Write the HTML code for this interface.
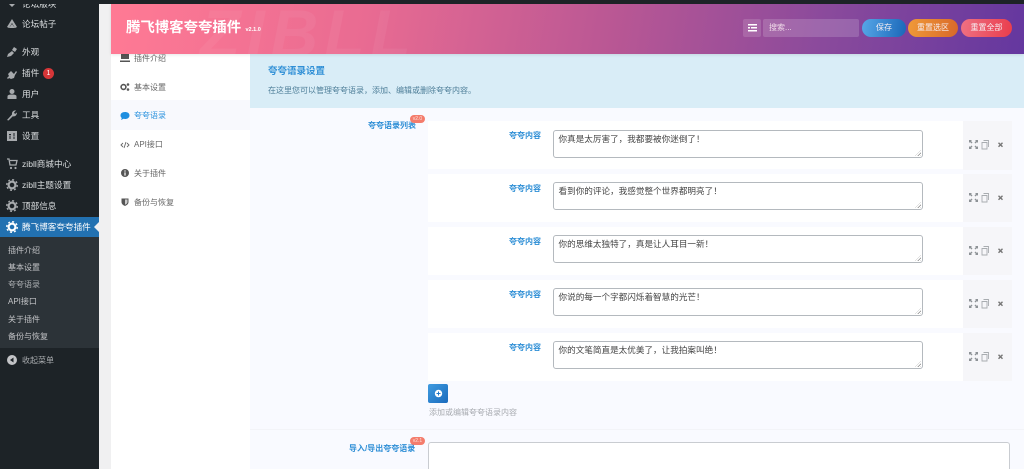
<!DOCTYPE html>
<html lang="zh">
<head>
<meta charset="utf-8">
<title>腾飞博客夸夸插件</title>
<style>
*{box-sizing:border-box}
html,body{margin:0;padding:0;width:1024px;height:469px;overflow:hidden}
#page{position:absolute;left:0;top:0;width:1024px;height:469px;overflow:hidden;background:#f0f0f1;font-family:"Liberation Sans","Noto Sans CJK SC",sans-serif;font-size:9px;color:#444}
.a{position:absolute;white-space:nowrap}
#side{position:absolute;left:0;top:0;width:98.5px;height:469px;background:#1d2327}
#top{position:absolute;left:0;top:0;width:1024px;height:3.5px;background:#1d2327}
.m{position:absolute;left:22px;color:#dcdfe1;font-size:8.6px;line-height:12px;white-space:nowrap}
.ic{position:absolute;left:6px;width:12px;height:12px}
#act{position:absolute;left:0;top:217px;width:98.5px;height:20px;background:#2271b1}
#act:after{content:"";position:absolute;right:0;top:5px;border:5px solid transparent;border-right-color:#f0f0f1;border-left:0}
#sub{position:absolute;left:0;top:237px;width:98.5px;height:111px;background:#2c3338}
.s{position:absolute;left:8px;color:#c3c4c7;font-size:8px;line-height:11px;white-space:nowrap}
#nav{position:absolute;left:111px;top:53px;width:139px;height:416px;background:#fff}
.n{position:absolute;left:23px;font-size:8px;line-height:12px;color:#666;white-space:nowrap}
.ni{position:absolute;left:9px;width:10px;height:10px}
#navact{position:absolute;left:0;top:47px;width:139px;height:30px;background:#f8f9fd}
#main{position:absolute;left:250px;top:53px;width:774px;height:416px;background:#f9faff}
#notice{position:absolute;left:250px;top:53px;width:774px;height:55px;background:#d9edf7}
#hdr{position:absolute;left:111px;top:3.5px;width:913px;height:50px;background:linear-gradient(100deg,#ff7a94 0%,#e96b92 28%,#b95794 55%,#8a4a9c 78%,#64379f 100%);box-shadow:0 1px 3px rgba(0,0,0,.1);overflow:hidden}
.btn{position:absolute;top:15.5px;height:18px;border-radius:9px;color:#f6eef2;font-size:8px;line-height:18px;text-align:center}
.row{position:absolute;left:428px;width:535px;background:#fff}
.act{position:absolute;left:963px;width:49px;background:#f6f6f9}
.lb{position:absolute;left:509px;color:#2f8fd6;font-size:8px;font-weight:bold;line-height:11px;white-space:nowrap}
.ta{position:absolute;left:553px;width:370px;height:28px;border:1px solid #b4b9be;border-radius:3px;background:#fff;color:#444;font-size:8.6px;line-height:13px;padding:1.5px 4.5px;white-space:nowrap}
.ta:after{content:"";position:absolute;right:1px;bottom:1px;width:6px;height:6px;background:repeating-linear-gradient(135deg,transparent 0 1.5px,#888 1.5px 2.2px);clip-path:polygon(100% 0,100% 100%,0 100%)}
.tool{position:absolute;left:969px;width:36px;height:10px}
.badge{position:absolute;background:#f47c6c;color:#fbe3de;border-radius:4px;font-size:5px;line-height:8px;height:8px;width:15px;text-align:center;white-space:nowrap}
</style>
</head>
<body>
<div id="page">
<div id="main"></div>
<div id="nav">
  <div id="navact"></div>
  <svg class="ni" style="top:0" viewBox="0 0 10 10"><path d="M1 1h8v5H1zM0 7.500h10V9H0z" fill="#555"/></svg>
  <div class="n" style="top:0">插件介绍</div>
  <svg class="ni" style="top:29px" viewBox="0 0 10 10"><circle cx="3.500" cy="5" r="2.400" fill="none" stroke="#555" stroke-width="1.600"/><circle cx="8" cy="2.500" r="1.300" fill="#555"/><circle cx="8" cy="7.500" r="1.300" fill="#555"/></svg>
  <div class="n" style="top:29px">基本设置</div>
  <svg class="ni" style="top:57.500px" viewBox="0 0 10 10"><path d="M5 1C2 1 .5 2.600.5 4.500c0 1 .5 1.900 1.300 2.500L1 9l2.600-1.200C4 8 4.500 8 5 8c3 0 4.500-1.600 4.500-3.500S8 1 5 1z" fill="#1e8fe0"/></svg>
  <div class="n" style="top:57px;color:#2f95df">夸夸语录</div>
  <svg class="ni" style="top:86.500px" viewBox="0 0 10 10"><path d="M3 3 1 5l2 2M7 3l2 2-2 2M6 2 4 8" fill="none" stroke="#666" stroke-width=".9"/></svg>
  <div class="n" style="top:86px">API接口</div>
  <svg class="ni" style="top:115px" viewBox="0 0 10 10"><circle cx="5" cy="5" r="4" fill="#555"/><path d="M4.400 2.400h1.200v1.200H4.400zM4.400 4.400h1.200v3.200H4.400z" fill="#fff"/></svg>
  <div class="n" style="top:115px">关于插件</div>
  <svg class="ni" style="top:144px" viewBox="0 0 10 10"><path d="M1.500 1.500h7V5c0 2-1.600 3.200-3.500 4C3.100 8.200 1.500 7 1.500 5z" fill="#555"/><path d="M5 2.500h2.500V5C7.500 6.300 6.400 7.200 5 7.800z" fill="#ccc"/></svg>
  <div class="n" style="top:144px">备份与恢复</div>
</div>
<div id="notice"></div>
<div class="a" style="left:268px;top:64.500px;font-size:9.500px;line-height:13px;font-weight:bold;color:#2f8fd6">夸夸语录设置</div>
<div class="a" style="left:268px;top:85px;font-size:8px;line-height:12px;color:#4f7f99">在这里您可以管理夸夸语录，添加、编辑或删除夸夸内容。</div>

<div id="hdr">
  <div class="a" style="left:89px;top:-4px;font-size:66px;line-height:66px;font-weight:bold;font-style:italic;letter-spacing:6px;color:rgba(255,255,255,.05)">ZIBLL</div>
  <div class="a" style="left:15px;top:13.500px;font-size:14.400px;line-height:22px;font-weight:bold;color:#fff">腾飞博客夸夸插件</div>
  <div class="a" style="left:134.500px;top:22.500px;font-size:5.500px;line-height:8px;font-weight:bold;color:#fff">v2.1.0</div>
  <div class="a" style="left:632px;top:15.500px;width:18px;height:18px;background:rgba(255,255,255,.14);border-radius:2px"></div>
  <svg class="a" style="left:636.500px;top:20.500px" width="9" height="8" viewBox="0 0 9 8"><path d="M0 0h9v1.500H0zM3 3h6v1.500H3zM0 3h2v1.500H0zM0 6h9v1.500H0z" fill="#fff"/></svg>
  <div class="a" style="left:652px;top:15.500px;width:96px;height:18px;background:rgba(255,255,255,.16);border-radius:2px;color:#f0dbe9;font-size:8px;line-height:18px;padding-left:6px">搜索...</div>
  <div class="btn" style="left:751px;width:44px;background:linear-gradient(100deg,#57a7e8,#1a67b8)">保存</div>
  <div class="btn" style="left:797px;width:50px;background:linear-gradient(100deg,#f09a38,#d9682a)">重置选区</div>
  <div class="btn" style="left:850px;width:51px;background:linear-gradient(100deg,#ee7183,#ea3d4c)">重置全部</div>
</div>

<div id="side">
  <svg class="ic" style="top:-2px" viewBox="0 0 12 12"><path d="M2 3h8v1.500H2zM3 6h6L6 9z" fill="#a7aaad"/></svg>
  <div class="m" style="top:-2px">论坛版块</div>
  <svg class="ic" style="top:18px" viewBox="0 0 12 12"><path d="M1 9 6 1l5 8-2 1-3-5-3 5z" fill="#a7aaad"/><path d="M3 10l3-4 3 4z" fill="#a7aaad"/></svg>
  <div class="m" style="top:18px">论坛帖子</div>
  <svg class="ic" style="top:46px" viewBox="0 0 12 12"><path d="M1 11l1-3 4-3 2 2-3 3zM6 4l2-3 3 2-2 3z" fill="#a7aaad"/></svg>
  <div class="m" style="top:46px">外观</div>
  <svg class="ic" style="top:67px" viewBox="0 0 12 12"><path d="M1 11l2-2-1-2 3-3 3 3 2-3 1 1-2 3-1 3-3 1-2-1-1 1z" fill="#a7aaad"/></svg>
  <div class="m" style="top:67px">插件</div>
  <div class="a" style="left:43px;top:67.500px;width:11px;height:11px;border-radius:50%;background:#d63638;color:#fff;font-size:7px;line-height:11px;text-align:center">1</div>
  <svg class="ic" style="top:88px" viewBox="0 0 12 12"><circle cx="6" cy="3.500" r="2.500" fill="#a7aaad"/><path d="M1.500 11V8.500C1.500 7 3 6.500 6 6.500s4.500.5 4.500 2V11z" fill="#a7aaad"/></svg>
  <div class="m" style="top:88px">用户</div>
  <svg class="ic" style="top:109px" viewBox="0 0 12 12"><path d="M1 11 6 5.500C5.600 3 7.500 1 10 1.500L8 3.500 9 5l2-1.500C11 6 9 8 6.800 7.200L2.500 11.500z" fill="#a7aaad"/></svg>
  <div class="m" style="top:109px">工具</div>
  <svg class="ic" style="top:130px" viewBox="0 0 12 12"><path d="M1 1h10v10H1z" fill="#a7aaad"/><path d="M3 4h2v1H3zM3.500 5.500h1V9h-1zM7.500 3h1v3.500h-1zM7 7.500h2v1H7z" fill="#1d2327"/></svg>
  <div class="m" style="top:130px">设置</div>
  <svg class="ic" style="top:158px" viewBox="0 0 12 12"><path d="M1 1h2l1 6h6l1-4.500H4" fill="none" stroke="#a7aaad" stroke-width="1.300"/><circle cx="5" cy="10" r="1.100" fill="#a7aaad"/><circle cx="9.500" cy="10" r="1.100" fill="#a7aaad"/></svg>
  <div class="m" style="top:158px">zibll商城中心</div>
  <svg class="ic" style="top:179px" viewBox="0 0 12 12"><circle cx="6" cy="6" r="3.400" fill="none" stroke="#a7aaad" stroke-width="2.200"/><circle cx="6" cy="6" r="5.300" fill="none" stroke="#a7aaad" stroke-width="1.300" stroke-dasharray="2 2.160"/></svg>
  <div class="m" style="top:179px">zibll主题设置</div>
  <svg class="ic" style="top:200px" viewBox="0 0 12 12"><circle cx="6" cy="6" r="3.400" fill="none" stroke="#a7aaad" stroke-width="2.200"/><circle cx="6" cy="6" r="5.300" fill="none" stroke="#a7aaad" stroke-width="1.300" stroke-dasharray="2 2.160"/></svg>
  <div class="m" style="top:200px">顶部信息</div>
  <div id="act"></div>
  <svg class="ic" style="top:221px" viewBox="0 0 12 12"><circle cx="6" cy="6" r="3.400" fill="none" stroke="#fff" stroke-width="2.200"/><circle cx="6" cy="6" r="5.300" fill="none" stroke="#fff" stroke-width="1.300" stroke-dasharray="2 2.160"/></svg>
  <div class="m" style="top:221px;color:#fff">腾飞博客夸夸插件</div>
  <div id="sub"></div>
  <div class="s" style="top:244.500px">插件介绍</div>
  <div class="s" style="top:261.500px">基本设置</div>
  <div class="s" style="top:278.500px;color:#a9acaf">夸夸语录</div>
  <div class="s" style="top:295.500px">API接口</div>
  <div class="s" style="top:313.500px">关于插件</div>
  <div class="s" style="top:330.500px">备份与恢复</div>
  <svg class="ic" style="top:353.500px" viewBox="0 0 12 12"><circle cx="6" cy="6" r="5" fill="#c3c4c7"/><path d="M7.500 3.500v5L4 6z" fill="#1d2327"/></svg>
  <div class="m" style="top:354.500px;color:#a9acaf;font-size:8px">收起菜单</div>
</div>
<div id="top"></div>

<div class="a" style="left:368px;top:120px;font-size:8px;line-height:11px;font-weight:bold;color:#2f8fd6">夸夸语录列表</div>
<div class="badge" style="left:410px;top:115px">v2.0</div>

<div class="row" style="top:121px;height:48px"></div><div class="act" style="top:121px;height:49px"></div>
<div class="row" style="top:174px;height:48px"></div><div class="act" style="top:174px;height:48px"></div>
<div class="row" style="top:227px;height:48px"></div><div class="act" style="top:227px;height:48px"></div>
<div class="row" style="top:280px;height:48px"></div><div class="act" style="top:280px;height:48px"></div>
<div class="row" style="top:333px;height:48px"></div><div class="act" style="top:333px;height:48px"></div>

<div class="lb" style="top:130px">夸夸内容</div>
<div class="ta" style="top:130px">你真是太厉害了，我都要被你迷倒了！</div>
<div class="lb" style="top:183px">夸夸内容</div>
<div class="ta" style="top:182px">看到你的评论，我感觉整个世界都明亮了！</div>
<div class="lb" style="top:236px">夸夸内容</div>
<div class="ta" style="top:235px">你的思维太独特了，真是让人耳目一新！</div>
<div class="lb" style="top:289px">夸夸内容</div>
<div class="ta" style="top:288px">你说的每一个字都闪烁着智慧的光芒！</div>
<div class="lb" style="top:342px">夸夸内容</div>
<div class="ta" style="top:341px">你的文笔简直是太优美了，让我拍案叫绝！</div>

<svg width="0" height="0" style="position:absolute"><defs><g id="t"><path d="M0 0h3L2 1l1.500 1.500-1 1L1 2 0 3zM9 0v3L8 2 6.500 3.500l-1-1L7 1 6 0zM0 9V6l1 1 1.500-1.500 1 1L2 8l1 1zM9 9H6l1-1-1.500-1.500 1-1L8 7l1-1z" fill="#8d9296"/><path d="M14.500 .5h5v6.500M13 2.500h5v6.500h-5z" fill="none" stroke="#a8acb0" stroke-width=".9"/><path d="M29 2.500l1-1 1.500 1.500L33 1.500l1 1L32.500 4 34 5.500l-1 1L31.500 5 30 6.500l-1-1L30.500 4z" fill="#777" transform="translate(0,.8)"/></g></defs></svg>
<svg class="tool" style="top:140px"><use href="#t"/></svg>
<svg class="tool" style="top:193px"><use href="#t"/></svg>
<svg class="tool" style="top:246px"><use href="#t"/></svg>
<svg class="tool" style="top:299px"><use href="#t"/></svg>
<svg class="tool" style="top:352px"><use href="#t"/></svg>

<div class="a" style="left:428px;top:384px;width:20px;height:19px;border-radius:2px;background:linear-gradient(135deg,#3f9be0,#1a6bbd)"></div>
<svg class="a" style="left:433.500px;top:389px" width="9" height="9" viewBox="0 0 9 9"><circle cx="4.500" cy="4.500" r="3.700" fill="#fff"/><path d="M2.500 4h4v1h-4zM4 2.500h1v4H4z" fill="#2379c9"/></svg>
<div class="a" style="left:429px;top:407px;font-size:8px;line-height:12px;color:#a8abb0">添加或编辑夸夸语录内容</div>

<div class="a" style="left:250px;top:429px;width:774px;height:1px;background:#f3f4f8"></div>
<div class="a" style="left:349px;top:443px;font-size:8px;line-height:11px;font-weight:bold;color:#2f8fd6">导入/导出夸夸语录</div>
<div class="badge" style="left:410px;top:437px">v2.1</div>
<div class="a" style="left:428px;top:442px;width:582px;height:27px;background:#fff;border:1px solid #c9ccd1;border-bottom:0;border-radius:3px 3px 0 0"></div>
</div>
</body>
</html>
